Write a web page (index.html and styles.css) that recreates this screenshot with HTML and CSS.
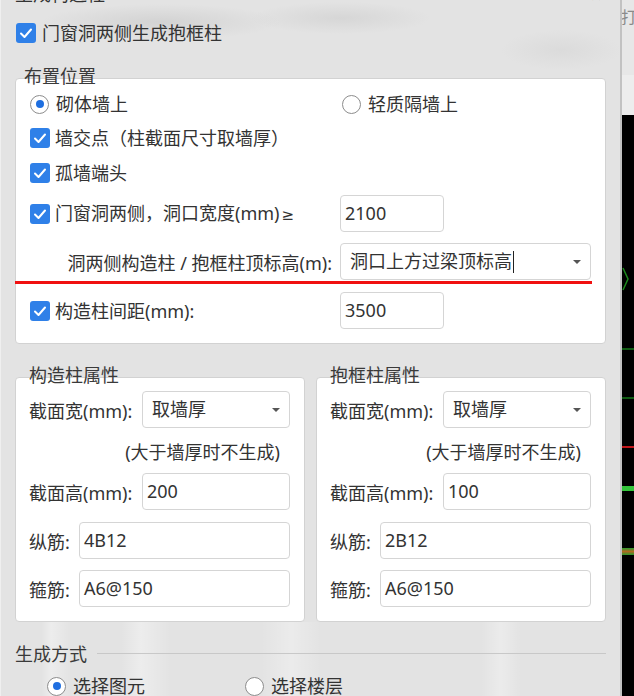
FILE: index.html
```html
<!DOCTYPE html>
<html lang="zh-CN">
<head>
<meta charset="utf-8">
<title>生成构造柱</title>
<link rel="stylesheet" href="styles.css">
</head>
<body>
<div class="screen">
  <div class="dialog">
    <div class="titlebar">生成构造柱</div>
    <span class="close">×</span>

    <label class="opt top-check">
      <span class="cb"><svg viewBox="0 0 20 20" width="20" height="20"><polyline points="5,10.5 8.5,14 15,6.5" fill="none" stroke="#fff" stroke-width="2" stroke-linecap="round" stroke-linejoin="round"/></svg></span>
      <span>门窗洞两侧生成抱框柱</span>
    </label>

    <div class="group place-group">
      <div class="legend">布置位置</div>
      <div class="box place">
        <div class="frow r1">
          <label class="opt"><span class="rb on"></span><span>砌体墙上</span></label>
          <label class="opt second"><span class="rb"></span><span>轻质隔墙上</span></label>
        </div>
        <label class="opt r2">
          <span class="cb"><svg viewBox="0 0 20 20" width="20" height="20"><polyline points="5,10.5 8.5,14 15,6.5" fill="none" stroke="#fff" stroke-width="2" stroke-linecap="round" stroke-linejoin="round"/></svg></span>
          <span>墙交点（柱截面尺寸取墙厚）</span>
        </label>
        <label class="opt r3">
          <span class="cb"><svg viewBox="0 0 20 20" width="20" height="20"><polyline points="5,10.5 8.5,14 15,6.5" fill="none" stroke="#fff" stroke-width="2" stroke-linecap="round" stroke-linejoin="round"/></svg></span>
          <span>孤墙端头</span>
        </label>
        <div class="frow r4">
          <label class="opt">
            <span class="cb"><svg viewBox="0 0 20 20" width="20" height="20"><polyline points="5,10.5 8.5,14 15,6.5" fill="none" stroke="#fff" stroke-width="2" stroke-linecap="round" stroke-linejoin="round"/></svg></span>
            <span>门窗洞两侧，洞口宽度(mm)<span class="ge">≥</span></span>
          </label>
          <div class="input short">2100</div>
        </div>
        <div class="frow r5">
          <div class="rlabel">洞两侧构造柱 / 抱框柱顶标高(m):</div>
          <div class="select wide"><span class="val">洞口上方过梁顶标高<span class="caret"></span></span><span class="arrow"></span></div>
          <span class="redline"></span>
        </div>
        <div class="frow r6">
          <label class="opt">
            <span class="cb"><svg viewBox="0 0 20 20" width="20" height="20"><polyline points="5,10.5 8.5,14 15,6.5" fill="none" stroke="#fff" stroke-width="2" stroke-linecap="round" stroke-linejoin="round"/></svg></span>
            <span>构造柱间距(mm):</span>
          </label>
          <div class="input short">3500</div>
        </div>
      </div>
    </div>

    <div class="props">
      <div class="group half">
        <div class="legend low">构造柱属性</div>
        <div class="box attr">
          <div class="arow"><span class="alabel">截面宽(mm):</span><div class="select"><span class="val">取墙厚</span><span class="arrow"></span></div></div>
          <div class="note">(大于墙厚时不生成)</div>
          <div class="arow g9"><span class="alabel">截面高(mm):</span><div class="input">200</div></div>
          <div class="arow g12"><span class="alabel narrow">纵筋:</span><div class="input">4B12</div></div>
          <div class="arow g11"><span class="alabel narrow">箍筋:</span><div class="input">A6@150</div></div>
        </div>
      </div>
      <div class="group half">
        <div class="legend low">抱框柱属性</div>
        <div class="box attr">
          <div class="arow"><span class="alabel">截面宽(mm):</span><div class="select"><span class="val">取墙厚</span><span class="arrow"></span></div></div>
          <div class="note">(大于墙厚时不生成)</div>
          <div class="arow g9"><span class="alabel">截面高(mm):</span><div class="input">100</div></div>
          <div class="arow g12"><span class="alabel narrow">纵筋:</span><div class="input">2B12</div></div>
          <div class="arow g11"><span class="alabel narrow">箍筋:</span><div class="input">A6@150</div></div>
        </div>
      </div>
    </div>

    <div class="section">
      <span>生成方式</span>
      <span class="hr"></span>
    </div>
    <div class="gen-radios">
      <label class="opt first"><span class="rb on"></span><span>选择图元</span></label>
      <label class="opt"><span class="rb"></span><span>选择楼层</span></label>
    </div>
  </div>

  <div class="outside">
    <div class="out-top"><span class="peek">打</span></div>
    <div class="out-mid"></div>
    <div class="canvas">
      <svg class="chev" viewBox="0 0 12 24" width="12" height="24"><polyline points="1,1 6,12 1,23" fill="none" stroke="#1c8a1c" stroke-width="1.5"/></svg>
      <span class="ln l1"></span>
      <span class="ln l2"></span>
      <span class="ln l3"></span>
      <span class="ln l4"></span>
      <span class="ln l5"></span>
    </div>
  </div>
</div>
</body>
</html>
```

FILE: styles.css
```css
* { box-sizing: border-box; margin: 0; padding: 0; }
html, body { width: 634px; height: 696px; overflow: hidden; }
body {
  font-family: "Noto Sans", "Noto Sans CJK SC", sans-serif;
  font-size: 18px;
  color: #333;
  background: #000;
}
.screen { display: flex; width: 634px; height: 696px; }

.dialog {
  position: relative;
  width: 622px;
  height: 696px;
  flex: none;
  overflow: hidden;
  padding: 0 14px 0 14px;
  border-left: 1px solid #efefef;
  border-right: 2px solid #c2c2c2;
  background:
    radial-gradient(ellipse 120px 18px at 160px 22px, rgba(180,180,180,0.35), transparent),
    radial-gradient(ellipse 90px 16px at 340px 18px, rgba(190,190,190,0.35), transparent),
    radial-gradient(ellipse 60px 20px at 560px 50px, rgba(200,200,200,0.3), transparent),
    linear-gradient(90deg, transparent 0, transparent 40px, rgba(255,255,255,0.35) 50px, transparent 70px, transparent 120px, rgba(255,255,255,0.35) 140px, transparent 170px, transparent 260px, rgba(255,255,255,0.3) 290px, transparent 320px, transparent 480px, rgba(255,255,255,0.3) 500px, transparent 520px) 0 622px / 100% 80px no-repeat,
    #e3e3e3;
}
.titlebar { height: 24px; line-height: 24px; margin-top: -18px; color: #333; }
.close { position: absolute; top: -14px; right: 18px; font-size: 20px; line-height: 20px; color: #555; }

.opt { display: flex; align-items: center; height: 24px; line-height: 24px; white-space: nowrap; }
.ge { font-family: "DejaVu Sans", sans-serif; font-size: 15px; margin-left: 2px; }
.cb {
  width: 20px; height: 20px; flex: none;
  border-radius: 3px;
  background: #2f80e8;
  display: flex; align-items: center; justify-content: center;
  margin-right: 5px;
}
.cb svg { display: block; }
.rb {
  width: 19px; height: 19px; flex: none;
  border-radius: 50%;
  border: 1px solid #8d8d8d;
  background: #fff;
  margin-right: 7px;
  display: flex; align-items: center; justify-content: center;
}
.rb.on::after { content: ""; width: 8px; height: 8px; border-radius: 50%; background: #1f6fe0; }

.top-check { margin-top: 15px; padding-left: 1px; }
.top-check .cb { margin-right: 6px; }

.group { display: flex; flex-direction: column; }
.legend { position: relative; z-index: 1; height: 24px; line-height: 24px; padding-left: 9px; color: #3a3a3a; }
.legend.low { padding-left: 14px; }
.place-group { margin-top: 19px; }
.box {
  margin-top: -10px;
  background: #fff;
  border: 1px solid #d2d2d2;
  border-radius: 4px;
}
.place { padding: 13px 14px 14px 14px; }

.frow { display: grid; grid-template-columns: 310px auto; align-items: center; position: relative; }
.r1 { height: 24px; }
.r1 .second { padding-left: 2px; }
.r2 { margin-top: 10px; }
.r3 { margin-top: 11px; }
.r4 { margin-top: 10px; height: 37px; }
.r5 { margin-top: 11px; height: 37px; }
.r6 { margin-top: 12px; height: 37px; }
.rlabel { text-align: right; padding-right: 8px; white-space: nowrap; }

.input, .select {
  height: 37px;
  background: #fff;
  border: 1px solid #d5d5d5;
  border-radius: 4px;
  line-height: 35px;
  padding-left: 4px;
  color: #333;
  white-space: nowrap;
}
.input.short { width: 104px; }
.select { display: flex; align-items: center; justify-content: space-between; padding-left: 9px; padding-right: 9px; }
.select.wide { width: 251px; }
.val { display: flex; align-items: center; }
.caret { display: inline-block; width: 1px; height: 22px; background: #222; margin-left: 1px; }
.arrow { width: 0; height: 0; border-left: 4px solid transparent; border-right: 4px solid transparent; border-top: 4px solid #555; }

.redline { position: absolute; left: -15px; right: -1px; bottom: -4px; height: 3px; background: #f01010; }

.props { display: flex; gap: 11px; margin-top: 19px; }
.half { flex: 1; }
.attr { padding: 13px 14px 14px 13px; }
.arow { display: flex; align-items: center; height: 37px; }
.alabel { width: 113px; flex: none; white-space: nowrap; }
.alabel.narrow { width: 50px; }
.arow .input, .arow .select { flex: 1; }
.note { height: 24px; line-height: 24px; margin-top: 12px; text-align: right; padding-right: 10px; white-space: nowrap; }
.g9 { margin-top: 9px; }
.g12 { margin-top: 12px; }
.g11 { margin-top: 11px; }

.section { display: flex; align-items: center; height: 24px; margin-top: 19px; color: #3a3a3a; }
.hr { flex: 1; height: 1px; background: #c8c8c8; margin-left: 10px; }
.gen-radios { display: flex; margin-top: 9px; padding-left: 32px; }
.gen-radios .first { width: 198px; }

.outside { width: 12px; flex: none; display: flex; flex-direction: column; }
.out-top { height: 75px; background: #e7e7e7; overflow: hidden; padding-top: 6px; }
.peek { display: block; margin-left: -1px; font-size: 16px; line-height: 22px; color: #8a8a8a; }
.out-mid { height: 40px; background: #ededed; }
.canvas { flex: 1; position: relative; background: #000; }
.chev { position: absolute; left: 0; top: 152px; }
.ln { position: absolute; left: 0; right: 0; }
.l1 { top: 233px; height: 2px; background: #0f5a12; }
.l2 { top: 282px; height: 2px; background: #0f5a12; }
.l3 { top: 331px; height: 2px; background: #c0161a; }
.l4 { top: 371px; height: 5px; background: #33c43a; }
.l5 { top: 433px; height: 7px; background: linear-gradient(#2a9a2e, #b06a20 50%, #2a9a2e); }
```
